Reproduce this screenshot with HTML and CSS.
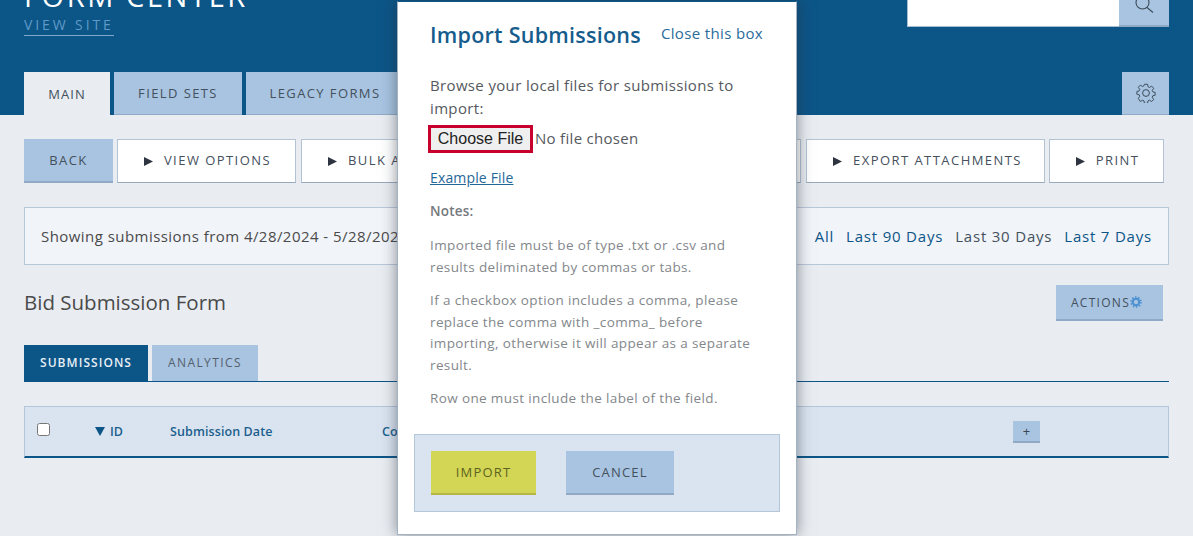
FILE: index.html
```html
<!DOCTYPE html>
<html lang="en">
<head>
<meta charset="utf-8">
<title>Form Center</title>
<link rel="stylesheet" href="styles.css">
</head>
<body>
<div class="page">
  <header class="header">
    <div class="top">
      <div class="brand">
        <h1 class="title">FORM CENTER</h1>
        <a class="viewsite" href="#">VIEW SITE</a>
      </div>
      <div class="search">
        <div class="search-input"></div>
        <div class="search-btn">
          <svg width="22" height="22" viewBox="0 0 22 22" fill="none" stroke="#3c4a58" stroke-width="1.1"><circle cx="9.500" cy="7.500" r="6.500"/><path d="M14 12.500l6 5"/></svg>
        </div>
      </div>
    </div>
    <nav class="tabs">
      <a class="tab tab-main">MAIN</a>
      <a class="tab tab-fs">FIELD SETS</a>
      <a class="tab tab-lf">LEGACY FORMS</a>
      <a class="tab tab-gear">
        <svg width="20" height="20" viewBox="0 0 20 20" fill="none" stroke="#3c4a58" stroke-width="1"><circle cx="10" cy="10" r="3.400"/><path d="M8.400 1h3.200l.5 2.600 1.500.7 2.300-1.400 2.100 2.300-1.500 2.200.6 1.500 2.400.6v2.900l-2.400.6-.6 1.500 1.500 2.200-2.100 2.300-2.300-1.400-1.500.7-.5 2.600H8.400l-.5-2.600-1.500-.7-2.300 1.400L2 15.700l1.500-2.200-.6-1.500L.5 11.400V8.500l2.400-.6.6-1.500L2 4.200l2.100-2.300 2.300 1.400 1.500-.7z" transform="translate(.4 .3) scale(.96)"/></svg>
      </a>
    </nav>
  </header>

  <main class="content">
    <div class="actions">
      <a class="btn btn-blue btn-back">BACK</a>
      <a class="btn btn-white btn-vo"><svg class="arrow" width="9" height="9" viewBox="0 0 9 9"><path d="M0 0l9 4.500L0 9z"/></svg>VIEW OPTIONS</a>
      <a class="btn btn-white btn-bulk"><svg class="arrow" width="9" height="9" viewBox="0 0 9 9"><path d="M0 0l9 4.500L0 9z"/></svg>BULK ACTIONS</a>
      <a class="btn btn-white btn-ea"><svg class="arrow" width="9" height="9" viewBox="0 0 9 9"><path d="M0 0l9 4.500L0 9z"/></svg>EXPORT ATTACHMENTS</a>
      <a class="btn btn-white btn-print"><svg class="arrow" width="9" height="9" viewBox="0 0 9 9"><path d="M0 0l9 4.500L0 9z"/></svg>PRINT</a>
    </div>

    <section class="range">
      <span class="range-text">Showing submissions from 4/28/2024 - 5/28/2024</span>
      <div class="range-links">
        <a class="link">All</a>
        <a class="link">Last 90 Days</a>
        <a class="plain">Last 30 Days</a>
        <a class="link">Last 7 Days</a>
      </div>
    </section>

    <div class="form-head">
      <h2 class="form-title">Bid Submission Form</h2>
      <a class="actions-btn">ACTIONS<svg class="cog" width="12" height="12" viewBox="0 0 12 12"><circle cx="6" cy="6" r="3.200" fill="none" stroke="#4a8fd0" stroke-width="2"/><circle cx="6" cy="6" r="5" fill="none" stroke="#4a8fd0" stroke-width="1.600" stroke-dasharray="1.500 1.640"/></svg></a>
    </div>

    <div class="subtabs">
      <a class="subtab subtab-on">SUBMISSIONS</a>
      <a class="subtab subtab-off">ANALYTICS</a>
    </div>

    <div class="thead">
      <input class="check" type="checkbox">
      <span class="col-id"><svg class="sort" width="10" height="9" viewBox="0 0 10 9"><path d="M0 0h10L5 9z"/></svg>ID</span>
      <span class="col-date">Submission Date</span>
      <span class="col-co">Contact</span>
      <span class="plus">+</span>
    </div>
  </main>

  <aside class="modal">
    <div class="modal-head">
      <h3 class="modal-title">Import Submissions</h3>
      <a class="close">Close this box</a>
    </div>
    <p class="browse">Browse your local files for submissions to import:</p>
    <div class="file-row"><span class="file-btn">Choose File</span><span class="file-none">No file chosen</span></div>
    <a class="example" href="#">Example File</a>
    <p class="notes-h">Notes:</p>
    <p class="note n1">Imported file must be of type .txt or .csv and results deliminated by commas or tabs.</p>
    <p class="note n2">If a checkbox option includes a comma, please replace the comma with _comma_ before importing, otherwise it will appear as a separate result.</p>
    <p class="note n3">Row one must include the label of the field.</p>
    <div class="modal-foot">
      <a class="foot-btn foot-import">IMPORT</a>
      <a class="foot-btn foot-cancel">CANCEL</a>
    </div>
  </aside>
</div>
</body>
</html>
```

FILE: styles.css
```css
* { box-sizing: border-box; }
html, body { margin: 0; padding: 0; }
body { font-family: "Open Sans", "Noto Sans", "Liberation Sans", sans-serif; color: #4a4a4a; }
a { text-decoration: none; }
h1, h2, h3, p { margin: 0; font-weight: normal; }

.page { position: relative; width: 1193px; height: 536px; overflow: hidden; background: #e9edf2; }

.header { height: 115px; background: #0c5587; padding: 0 24px; display: flex; flex-direction: column; justify-content: space-between; }
.top { display: flex; justify-content: space-between; align-items: flex-start; }
.brand { display: flex; flex-direction: column; align-items: flex-start; }
.title { font-size: 29px; line-height: 40px; margin-top: -24px; color: #fff; letter-spacing: 2.600px; }
.viewsite { font-size: 14px; line-height: 19px; margin-top: -1px; padding-bottom: 1px; color: #5f9ac8; letter-spacing: 2.900px; border-bottom: 1px solid #7fa9cc; }
.search { display: flex; height: 27px; }
.search-input { width: 212px; background: #fff; border: 1px solid #a8bdd3; border-width: 0 0 1px 1px; }
.search-btn { width: 50px; background: #a8c4e1; border-bottom: 2px solid #8fa9c6; display: flex; justify-content: center; align-items: flex-end; padding-bottom: 8px; overflow: hidden; }

.tabs { display: flex; gap: 4px; height: 43px; }
.tab { display: flex; align-items: center; justify-content: center; font-size: 13px; letter-spacing: 1.400px; color: #44505c; background: #a8c4e1; border-bottom: 1px solid #8fa9c6; }
.tab-main { width: 86px; background: #e9edf2; border-bottom: 0; letter-spacing: 1.100px; }
.tab-fs { width: 128px; }
.tab-lf { width: 158px; }
.tab-gear { width: 47px; margin-left: auto; }

.content { padding: 24px 24px 0; }
.actions { display: flex; height: 44px; }
.btn { display: flex; align-items: center; justify-content: center; font-size: 13px; letter-spacing: 1.450px; color: #44505c; }
.btn-blue { background: #a8c4e1; border-bottom: 2px solid #8fa9c6; }
.btn-white { background: #fff; border: 1px solid #b4c3d3; border-bottom-color: #98a9bd; padding: 0 0 2px 2px; }
.btn-back { width: 89px; }
.btn-vo { width: 179px; margin-left: 4px; }
.btn-bulk { width: 500px; margin-left: 5px; justify-content: flex-start; padding-left: 26px; }
.btn-ea { width: 239px; margin-left: 5px; padding-left: 4px; }
.btn-print { width: 115px; margin-left: 4px; }
.arrow { fill: #2e3540; margin: 2px 11px 0 0; display: block; }

.range { display: flex; justify-content: space-between; align-items: center; height: 58px; margin-top: 24px; padding: 0 16px; background: #f1f4f9; border: 1px solid #b9c8d9; font-size: 15px; }
.range-text { letter-spacing: .45px; }
.range-links { display: flex; gap: 12px; letter-spacing: .8px; }
.link { color: #0c5587; }
.plain { color: #44505c; }

.form-head { display: flex; justify-content: space-between; align-items: center; height: 36px; margin-top: 20px; padding-right: 6px; }
.form-title { font-size: 20.500px; color: #4a4a4a; margin-top: -2px; }
.actions-btn { display: flex; align-items: center; justify-content: center; width: 107px; height: 36px; padding-right: 6px; background: #a8c4e1; border-bottom: 2px solid #8fa9c6; font-size: 12px; letter-spacing: 1.300px; color: #44505c; }
.cog { display: block; }

.subtabs { display: flex; gap: 4px; height: 37px; margin-top: 24px; border-bottom: 1px solid #0c5587; }
.subtab { display: flex; align-items: center; justify-content: center; height: 36px; padding-bottom: 2px; font-size: 12px; }
.subtab-on { width: 124px; background: #0c5587; color: #e6eef5; font-weight: 600; letter-spacing: 1.050px; }
.subtab-off { width: 106px; background: #a8c4e1; color: #55606c; letter-spacing: 1.400px; }

.thead { display: flex; align-items: center; height: 52px; margin-top: 24px; background: #dae4f0; border: 1px solid #b4c6da; border-bottom: 2px solid #0c5587; font-size: 12.500px; font-weight: 600; color: #1d5f8e; }
.check { width: 13px; height: 13px; margin: -5px 0 0 12px; }
.col-id { margin-left: 45px; width: 75px; }
.sort { fill: #0c5587; margin-right: 5px; }
.col-date { width: 212px; letter-spacing: .1px; }
.col-co { flex: 1; }
.plus { display: flex; align-items: center; justify-content: center; width: 27px; height: 22px; margin-right: 128px; background: #a8c4e1; border-bottom: 2px solid #8fa9c6; font-size: 13px; font-weight: normal; color: #3c4652; }

.modal { position: absolute; left: 397px; top: 1px; width: 400px; height: 534px; padding: 17px 16px 0 32px; background: #fff; border: 1px solid #a3b3c3; border-top: 1px solid #0c5587; box-shadow: 0 0 14px rgba(40,50,60,.55); }
.modal-head { display: flex; justify-content: space-between; align-items: center; height: 30px; padding-right: 17px; }
.modal-title { font-size: 21.500px; font-weight: 600; color: #165c8c; letter-spacing: .25px; }
.close { font-size: 15px; color: #2a6c9c; margin-top: -3px; letter-spacing: .35px; }
.browse { margin-top: 25px; font-size: 15px; line-height: 23px; color: #55595e; padding-right: 30px; letter-spacing: .35px; }
.file-row { display: flex; align-items: center; height: 28px; margin: 5px 0 0 -2px; }
.file-btn { display: flex; align-items: center; justify-content: center; width: 105px; height: 28px; background: #efefef; border: 3px solid #c8002d; font-family: "Liberation Sans", sans-serif; font-size: 16px; color: #222; }
.file-none { margin: -2px 0 0 2px; font-size: 15px; color: #55595e; letter-spacing: .3px; }
.example { display: inline-block; margin-top: 15px; font-size: 14px; color: #1f6898; text-decoration: underline; letter-spacing: .15px; }
.notes-h { margin-top: 14px; font-size: 13.500px; font-weight: 600; color: #75797d; letter-spacing: .2px; }
.note { font-size: 13.500px; line-height: 21.500px; color: #83878b; padding-right: 20px; letter-spacing: .37px; }
.n1 { margin-top: 15px; }
.n2 { margin-top: 12px; }
.n3 { margin-top: 12px; }
.modal-foot { display: flex; gap: 30px; align-items: flex-start; width: 366px; height: 78px; margin: 24px 0 0 -16px; padding: 16px; background: #dae4f0; border: 1px solid #b4c6da; }
.foot-btn { display: flex; align-items: center; justify-content: center; height: 44px; font-size: 13px; letter-spacing: 1.200px; color: #44505c; }
.foot-import { width: 105px; background: #d3d555; border-bottom: 2px solid #b5b644; color: #5b6420; }
.foot-cancel { width: 108px; background: #a8c4e1; border-bottom: 2px solid #8fa9c6; }
```
